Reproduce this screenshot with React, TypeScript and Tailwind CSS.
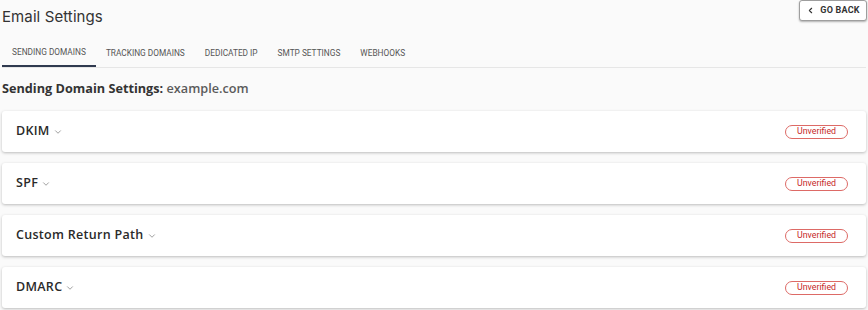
import { ChevronDown, ChevronLeft } from 'lucide-react';

const tabs = ['SENDING DOMAINS', 'TRACKING DOMAINS', 'DEDICATED IP', 'SMTP SETTINGS', 'WEBHOOKS'];
const records = ['DKIM', 'SPF', 'Custom Return Path', 'DMARC'];

export default function App() {
  return (
    <div className="w-[868px] h-[310px] bg-[#fafafa] px-[2px] overflow-hidden" style={{ fontFamily: 'Inter, "Open Sans", sans-serif' }}>
      {/* Header */}
      <div className="flex items-start justify-between h-[34px]">
        <h1 className="text-[15px] text-[#333] mt-[7px] leading-5 tracking-[0.1px]">Email Settings</h1>
        <button className="flex items-center gap-[3px] h-[21px] w-[68px] justify-center -mr-[1px] border border-[#9e9e9e] rounded-[3px] bg-white shadow-[0_1px_2px_rgba(0,0,0,0.3)] text-[9px] font-bold text-[#333]" style={{ fontFamily: 'Roboto, sans-serif' }}>
          <ChevronLeft className="w-[9px] h-[9px]" strokeWidth={3} />
          <span className="ml-[2px] tracking-[0.2px]">GO BACK</span>
        </button>
      </div>

      {/* Tabs */}
      <div className="flex border-b border-[#e6e6e6] h-[34px]" style={{ fontFamily: 'Roboto, sans-serif' }}>
        {tabs.map((t, i) => (
          <div key={t} className={`px-[10px] pt-[6px] flex items-center text-[8.3px] text-[#555] ${i === 0 ? 'border-b-2 border-[#2f3a4f] text-[#444]' : ''}`}>
            {t}
          </div>
        ))}
      </div>

      {/* Heading */}
      <div className="mt-[10px] mb-[13px] text-[12.7px] leading-5 text-[#333]" style={{ fontFamily: '"Open Sans", sans-serif' }}>
        <span className="font-bold">Sending Domain Settings:</span>{' '}
        <span className="font-semibold text-[#5a5a5a]">example.com</span>
      </div>

      {/* Records */}
      <div className="flex flex-col gap-[11px]">
        {records.map((r) => (
          <div key={r} className="h-[41px] bg-white rounded-[3px] shadow-[0_1px_3px_rgba(0,0,0,0.25)] flex items-center justify-between pl-[14px] pr-[18px]">
            <div className="flex items-center gap-[3px] text-[12.5px] tracking-[0.3px] font-semibold text-[#2a2a2a]" style={{ fontFamily: '"Open Sans", sans-serif' }}>
              {r}
              <ChevronDown className="w-[10px] h-[10px] text-[#666]" strokeWidth={1.5} />
            </div>
            <span className="w-[63px] h-[14px] rounded-full border border-[#dd6a66] text-[#c62828] text-[8.8px] flex items-center justify-center" style={{ fontFamily: 'Roboto, sans-serif' }}>
              Unverified
            </span>
          </div>
        ))}
      </div>
    </div>
  );
}
